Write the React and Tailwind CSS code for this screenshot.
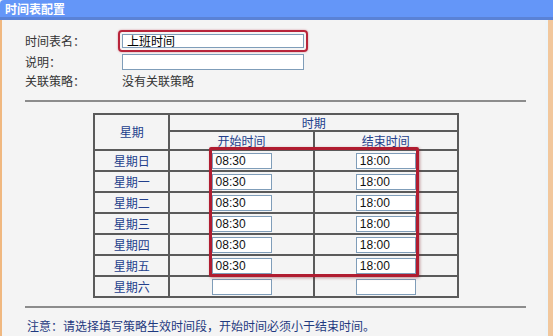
import React from "react";

const days = ["星期日", "星期一", "星期二", "星期三", "星期四", "星期五", "星期六"];

function TimeInput({ value }) {
  return (
    <div className="mx-auto flex h-[16px] w-[60px] items-center border border-[#7f9db9] bg-white pl-[3px] text-[12px] leading-none text-[#111] [font-family:'Liberation_Sans',Arial,sans-serif]">
      {value}
    </div>
  );
}

export default function App() {
  return (
    <div className="flex h-[336px] w-[553px] flex-col overflow-hidden bg-[#f4f4f4] text-[12px] [font-family:'Noto_Sans_CJK_SC',sans-serif]">
      <div className="flex h-[17px] shrink-0 items-center rounded-tl-[4px] bg-[#6496f8] pl-[5px] text-[12px] font-bold leading-none text-white">
        时间表配置
      </div>
      <div className="h-[3px] shrink-0 bg-[#5a82d6]" />
      <div className="flex flex-1 border-l-[2px] border-r-[5px] border-l-[#f0b880] border-r-[#f2c79c]">
        <div className="flex flex-1 flex-col border-r-[3px] border-r-[#eef4f8] pl-[23px]">
          <div className="mt-[10px] flex h-[22px] items-center">
            <div className="w-[93px] text-[#333]">时间表名：</div>
            <div className="rounded-[4px] border-2 border-[#b8243a] p-[2px] shadow-[0_0_2px_rgba(180,30,50,0.5)]">
              <div className="flex h-[14px] w-[182px] items-center border border-[#7f9db9] bg-white pl-[4px] text-[12px] leading-none text-black">
                上班时间
              </div>
            </div>
          </div>
          <div className="mt-[2px] flex h-[16px] items-center">
            <div className="w-[97px] text-[#333]">说明：</div>
            <div className="h-[16px] w-[182px] border border-[#7f9db9] bg-white" />
          </div>
          <div className="mt-[4px] flex h-[14px] items-center">
            <div className="w-[97px] text-[#333]">关联策略：</div>
            <div className="text-[#333]">没有关联策略</div>
          </div>
          <div className="mt-[12px] h-[2px] w-[501px] bg-[#8c8c8c]" />
          <div className="relative ml-[68px] mt-[11px] w-[366px]">
            <table className="w-[366px] border-collapse border-2 border-[#5a5a5a] text-[#23408c]">
              <colgroup>
                <col className="w-[76px]" />
                <col className="w-[145px]" />
                <col className="w-[145px]" />
              </colgroup>
              <tbody>
                <tr className="h-[17px]">
                  <td rowSpan={2} className="border-2 border-[#5a5a5a] text-center">星期</td>
                  <td colSpan={2} className="border-2 border-[#5a5a5a] p-0 text-center leading-none">时期</td>
                </tr>
                <tr className="h-[19px]">
                  <td className="border-2 border-[#5a5a5a] p-0 text-center leading-none">开始时间</td>
                  <td className="border-2 border-[#5a5a5a] p-0 text-center leading-none">结束时间</td>
                </tr>
                {days.map((d, i) => (
                  <tr key={d} className="h-[21px]">
                    <td className="border-2 border-[#5a5a5a] p-0 text-center leading-none">{d}</td>
                    <td className="border-2 border-[#5a5a5a] p-0">
                      <TimeInput value={i < 6 ? "08:30" : ""} />
                    </td>
                    <td className="border-2 border-[#5a5a5a] p-0">
                      <TimeInput value={i < 6 ? "18:00" : ""} />
                    </td>
                  </tr>
                ))}
              </tbody>
            </table>
            <div className="pointer-events-none absolute left-[116px] top-[34px] h-[130px] w-[210px] rounded-[2px] border-[3px] border-[#b01c30] shadow-[1px_1px_3px_rgba(120,20,30,0.45)]" />
          </div>
          <div className="mt-[8px] h-[2px] w-[501px] bg-[#8c8c8c]" />
          <div className="mt-[9px] pl-[2px] text-[#1f3a80]">注意：请选择填写策略生效时间段，开始时间必须小于结束时间。</div>
        </div>
      </div>
    </div>
  );
}
